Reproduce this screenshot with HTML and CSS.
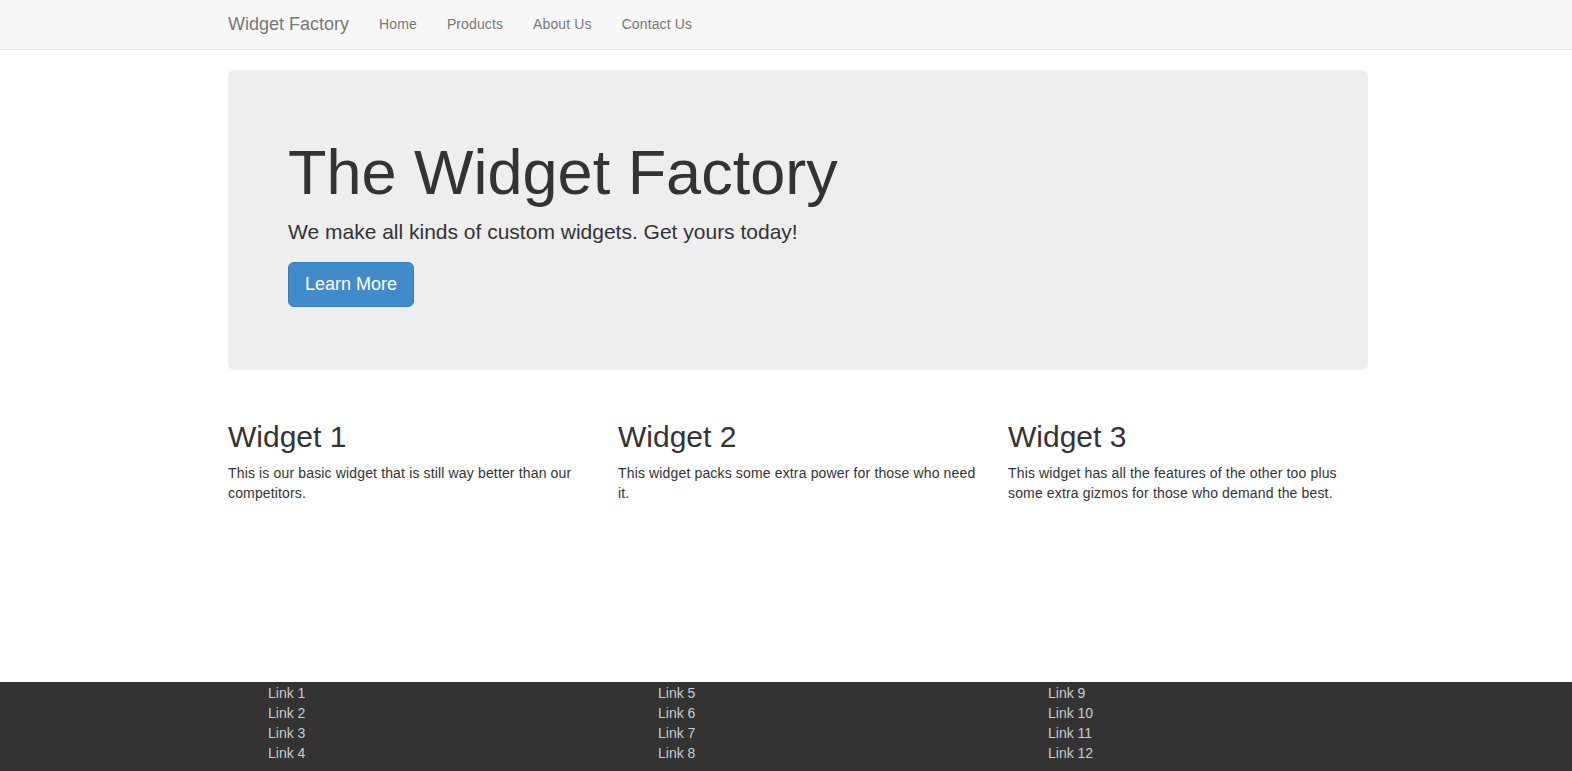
FILE: index.html
```html
<!DOCTYPE html>
<html lang="en">
<head>
<meta charset="utf-8">
<title>Widget Factory</title>
<link rel="stylesheet" href="styles.css">
</head>
<body>
<nav class="navbar">
  <div class="container nav-inner">
    <a class="brand" href="#">Widget Factory</a>
    <ul class="nav-links">
      <li><a href="#">Home</a></li>
      <li><a href="#">Products</a></li>
      <li><a href="#">About Us</a></li>
      <li><a href="#">Contact Us</a></li>
    </ul>
  </div>
</nav>
<main class="main">
  <div class="container">
    <div class="jumbotron">
      <h1>The Widget Factory</h1>
      <p class="lead">We make all kinds of custom widgets. Get yours today!</p>
      <p class="cta"><a class="btn" href="#">Learn More</a></p>
    </div>
    <div class="row">
      <div class="col">
        <h2>Widget 1</h2>
        <p>This is our basic widget that is still way better than our competitors.</p>
      </div>
      <div class="col">
        <h2>Widget 2</h2>
        <p>This widget packs some extra power for those who need it.</p>
      </div>
      <div class="col">
        <h2>Widget 3</h2>
        <p>This widget has all the features of the other too plus some extra gizmos for those who demand the best.</p>
      </div>
    </div>
  </div>
</main>
<footer class="footer">
  <div class="container">
    <div class="row">
      <div class="col">
        <ul class="links">
          <li><a href="#">Link 1</a></li>
          <li><a href="#">Link 2</a></li>
          <li><a href="#">Link 3</a></li>
          <li><a href="#">Link 4</a></li>
        </ul>
      </div>
      <div class="col">
        <ul class="links">
          <li><a href="#">Link 5</a></li>
          <li><a href="#">Link 6</a></li>
          <li><a href="#">Link 7</a></li>
          <li><a href="#">Link 8</a></li>
        </ul>
      </div>
      <div class="col">
        <ul class="links">
          <li><a href="#">Link 9</a></li>
          <li><a href="#">Link 10</a></li>
          <li><a href="#">Link 11</a></li>
          <li><a href="#">Link 12</a></li>
        </ul>
      </div>
    </div>
  </div>
</footer>
</body>
</html>
```

FILE: styles.css
```css
* { box-sizing: border-box; }
html, body { margin: 0; padding: 0; }
body {
  font-family: "Liberation Sans", Arial, Helvetica, sans-serif;
  font-size: 14px;
  line-height: 20px;
  color: #333;
  background: #fff;
  min-height: 100vh;
  display: flex;
  flex-direction: column;
}
a { text-decoration: none; }

.container {
  width: 1170px;
  margin-left: calc(50% - 573px);
  padding: 0 15px;
}

.navbar {
  height: 50px;
  background: #f8f8f8;
  border-bottom: 1px solid #e7e7e7;
}
.nav-inner {
  display: flex;
  align-items: center;
  height: 49px;
  padding-bottom: 2px;
}
.brand {
  margin-left: -15px;
  padding: 0 15px;
  font-size: 18px;
  line-height: 20px;
  color: #777;
}
.nav-links {
  display: flex;
  list-style: none;
  margin: 0;
  padding: 0;
}
.nav-links a {
  display: block;
  padding: 0 15px;
  color: #777;
  font-size: 14px;
  line-height: 20px;
  letter-spacing: 0.12px;
}

.main { flex: 1; }

.jumbotron {
  margin-top: 20px;
  margin-bottom: 30px;
  padding: 48px 60px;
  height: 300px;
  background: #eee;
  border-radius: 6px;
}
.jumbotron h1 {
  margin: 20px 0 10px;
  font-size: 63px;
  line-height: 69px;
  font-weight: 500;
  color: #333;
}
.jumbotron .lead {
  margin: 0 0 15px;
  font-size: 21px;
  line-height: 30px;
  font-weight: 200;
}
.jumbotron .cta { margin: 0; }
.btn {
  display: inline-block;
  padding: 9px 16px 10px;
  font-size: 18px;
  line-height: 24px;
  color: #fff;
  background: #428bca;
  border: 1px solid #357ebd;
  border-radius: 6px;
}

.row {
  display: flex;
  margin: 0 -15px;
}
.col {
  width: 390px;
  padding: 0 15px;
}
.col h2 {
  margin: 20px 0 10px;
  font-size: 30px;
  line-height: 33px;
  font-weight: 500;
}
.col p {
  margin: 0 0 10px;
  letter-spacing: 0.15px;
}

.footer {
  background: #333;
  height: 89px;
}
.links {
  list-style: none;
  margin: 0;
  padding: 1px 0 0 40px;
}
.links a { color: #ccc; }
```
